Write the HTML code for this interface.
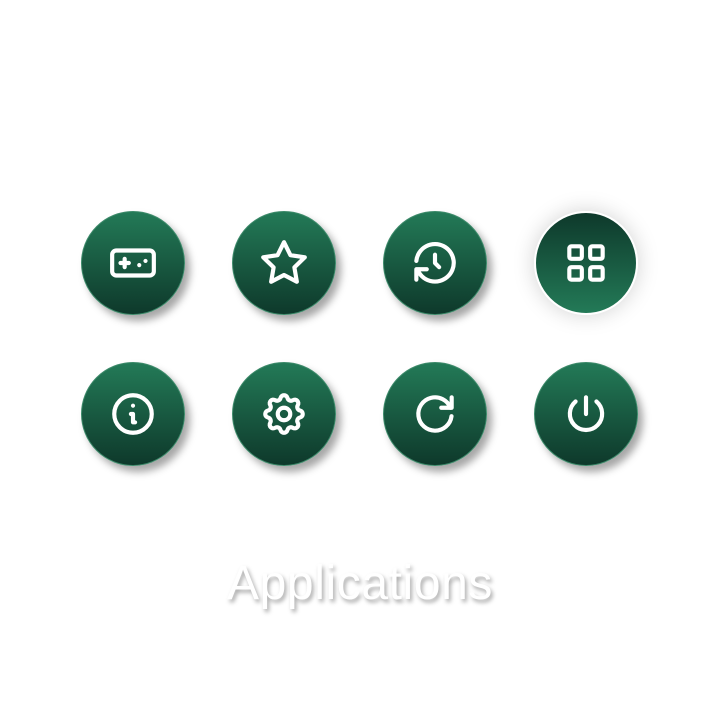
<!DOCTYPE html>
<html><head><style>
html,body{margin:0;padding:0;background:#fff;width:720px;height:720px;overflow:hidden;font-family:"Liberation Sans",sans-serif}
.b{position:absolute;width:104px;height:104px;border-radius:50%;box-sizing:border-box;border:1px solid #3d8a6a;
background:linear-gradient(#237a57,#0e392b);box-shadow:5px 6px 8px rgba(0,0,0,.35);display:flex;align-items:center;justify-content:center}
.b.a{background:linear-gradient(#0e392b,#237a57);border:2px solid #fff;box-shadow:0 0 22px rgba(0,0,0,.18)}
.b svg{width:50px;height:50px;fill:none;stroke:#fff;stroke-width:2;stroke-linecap:round;stroke-linejoin:round}
.t{position:absolute;left:0;width:720px;top:556px;text-align:center;color:#fff;font-size:48px;letter-spacing:0.6px;text-shadow:2px 3px 4px rgba(0,0,0,.35)}
</style></head><body>
<div class="b" style="left:81px;top:211px"><svg viewBox="0 0 24 24"><rect x="2" y="6" width="20" height="12" rx="2"/><path d="M6 12h4M8 10v4M15 13v.01M18 11v.01"/></svg></div>
<div class="b" style="left:232px;top:211px"><svg viewBox="0 0 24 24"><path d="M12 17.75l-6.17 3.24 1.18-6.87-5-4.87 6.9-1L12 2l3.09 6.25 6.9 1-5 4.87 1.18 6.87z"/></svg></div>
<div class="b" style="left:383px;top:211px"><svg viewBox="0 0 24 24"><path d="M12 8v4l2 2"/><path d="M3.05 11a9 9 0 1 1 .5 4m-.5 5v-5h5"/></svg></div>
<div class="b a" style="left:534px;top:211px"><svg viewBox="0 0 24 24"><rect x="4" y="4" width="6" height="6" rx="1"/><rect x="14" y="4" width="6" height="6" rx="1"/><rect x="4" y="14" width="6" height="6" rx="1"/><rect x="14" y="14" width="6" height="6" rx="1"/></svg></div>
<div class="b" style="left:81px;top:362px"><svg viewBox="0 0 24 24"><circle cx="12" cy="12" r="9"/><path d="M12 8h.01M11 12h1v4h1"/></svg></div>
<div class="b" style="left:232px;top:362px"><svg viewBox="0 0 24 24"><path d="M10.33 4.32c.43-1.76 2.92-1.76 3.35 0a1.72 1.72 0 0 0 2.57 1.07c1.54-.94 3.31.82 2.37 2.37a1.72 1.72 0 0 0 1.06 2.57c1.760.43 1.76 2.92 0 3.35a1.72 1.72 0 0 0-1.07 2.57c.94 1.54-.82 3.31-2.37 2.37a1.72 1.72 0 0 0-2.57 1.06c-.43 1.76-2.92 1.76-3.350 0a1.72 1.72 0 0 0-2.57-1.07c-1.54.94-3.31-.82-2.37-2.37a1.72 1.72 0 0 0-1.06-2.57c-1.76-.43-1.76-2.92 0-3.35a1.72 1.72 0 0 0 1.07-2.57c-.94-1.54.82-3.31 2.37-2.37 1 .61 2.3.07 2.57-1.06z"/><circle cx="12" cy="12" r="3"/></svg></div>
<div class="b" style="left:383px;top:362px"><svg viewBox="0 0 24 24"><path d="M19.93 13.04a8 8 0 1 1-9.92-8.79c3.9-1 7.93 1.01 9.42 4.75"/><path d="M20 4v5h-5"/></svg></div>
<div class="b" style="left:534px;top:362px"><svg viewBox="0 0 24 24"><path d="M7 6a7.75 7.75 0 1 0 10 0M12 4v8"/></svg></div>
<div class="t">Applications</div>
</body></html>
